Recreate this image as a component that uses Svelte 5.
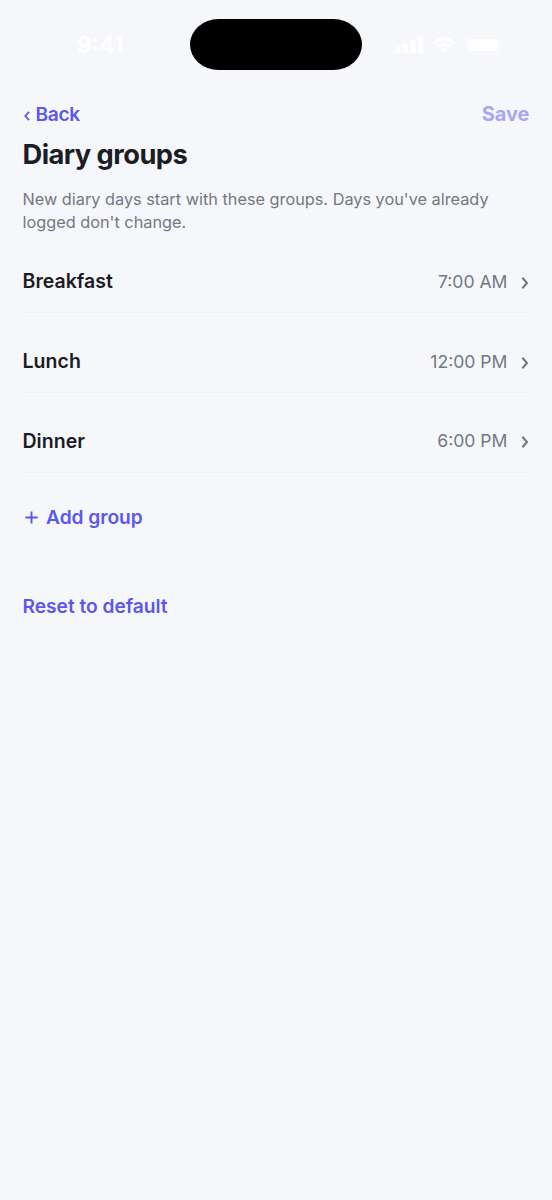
<script>
  const title = 'Diary groups';
  let groups = [
    { name: 'Breakfast', time: '7:00 AM' },
    { name: 'Lunch', time: '12:00 PM' },
    { name: 'Dinner', time: '6:00 PM' },
  ];
</script>

<style>
  :global(body) {
    background: #f6f7fb;
  }

  .screen {
    box-sizing: border-box;
    min-height: 1200px;
    background: #f6f7fb;
    color: #1b1c24;
    font-family: Inter, 'Liberation Sans', sans-serif;
  }

  .status {
    display: grid;
    grid-template-columns: 190px 172px 1fr;
    box-sizing: border-box;
    height: 99px;
    padding-top: 19px;
    color: #fff;
  }

  .clock {
    height: 51px;
    line-height: 52px;
    padding-left: 77px;
    font-size: 23px;
    font-weight: 600;
  }

  .island {
    height: 51px;
    border-radius: 29px / 26px;
    background: #000;
  }

  .signals {
    display: block;
    margin: 14px 0 0 31px;
  }

  main {
    padding: 0 22.5px;
  }

  button {
    display: block;
    margin: 0;
    padding: 0;
    border: 0;
    background: none;
    font: inherit;
    font-size: 19.2px;
    font-weight: 600;
    line-height: 30px;
    letter-spacing: -0.03px;
    color: #5b58f0;
  }

  header {
    display: flex;
    justify-content: space-between;
    height: 30px;
  }

  header button,
  .add {
    display: flex;
    align-items: center;
  }

  .back {
    letter-spacing: -0.35px;
  }

  .save {
    font-size: 20px;
    font-weight: 700;
    opacity: 0.5;
  }

  .back svg {
    margin: 3px 6px 0 1px;
  }

  h1 {
    margin: 8px 0 0;
    font-size: 27.3px;
    font-weight: 700;
    line-height: 36px;
    letter-spacing: -0.55px;
  }

  .hint {
    margin: 15px 0 0;
    font-size: 16.3px;
    line-height: 23.4px;
    color: #747784;
  }

  ul {
    margin: 15.6px 0 0;
    padding: 0;
    list-style: none;
  }

  li {
    display: flex;
    align-items: center;
    box-sizing: border-box;
    height: 79.6px;
    padding-top: 17px;
    border-bottom: 1px solid #eeeff3;
  }

  li:first-child {
    height: 63px;
    padding-top: 0;
  }

  .name {
    flex: 1;
    font-size: 19.5px;
    font-weight: 600;
    letter-spacing: 0.03px;
  }

  .time {
    font-size: 17.6px;
    color: #747784;
  }

  li svg {
    margin: 3px 1px 0 13px;
  }

  .add {
    margin-top: 29.8px;
  }

  .add svg {
    margin: 0 8px 0 2.5px;
  }

  .reset {
    margin-top: 59px;
  }
</style>

<div class="screen">
  <div class="status">
    <div class="clock">9:41</div>
    <div class="island"></div>
    <svg class="signals" width="112" height="24" viewBox="0 0 112 24" fill="#fff">
      <rect x="2.5" y="14" width="5" height="6.3" rx="1.4" />
      <rect x="10" y="11" width="5" height="9.3" rx="1.4" />
      <rect x="17.5" y="7" width="5" height="13.3" rx="1.4" />
      <rect x="25" y="3.3" width="5" height="17" rx="1.4" />
      <path d="M40 9.2Q51 -1.8 62 9.2L59.8 11.4Q51 2.9 42.2 11.4Z" />
      <path d="M43.8 13Q51 6 58.2 13L56 15.2Q51 10.7 46 15.2Z" />
      <path d="M47.4 16.6Q51 13.6 54.6 16.6L51 20.2Z" />
      <rect x="73.7" y="3.7" width="33" height="16.3" rx="5" fill="none" stroke="#fff" stroke-opacity="0.4" stroke-width="1.3" />
      <rect x="75.5" y="5.7" width="29" height="12.3" rx="3.5" />
      <path d="M108 9.7Q110.6 11.8 108 13.9Z" fill-opacity="0.45" />
    </svg>
  </div>

  <main>
    <header>
      <button class="back">
        <svg width="6" height="10" viewBox="0 0 6 10" fill="none" stroke="currentColor" stroke-width="1.8">
          <path d="M5 0.8L1.3 5L5 9.2" />
        </svg>
        Back
      </button>
      <button class="save" disabled>Save</button>
    </header>

    <h1>{title}</h1>
    <p class="hint">New diary days start with these groups. Days you've already logged don't change.</p>

    <ul>
      {#each groups as group}
        <li>
          <span class="name">{group.name}</span>
          <span class="time">{group.time}</span>
          <svg width="8" height="12" viewBox="0 0 8 12" fill="none" stroke="#747784" stroke-width="2.1">
            <path d="M1.4 0.8L6 6L1.4 11.2" />
          </svg>
        </li>
      {/each}
    </ul>

    <button class="add">
      <svg width="13" height="13" viewBox="0 0 13 13" stroke="currentColor" stroke-width="1.9">
        <path d="M6.5 0.4V12.6M0.4 6.5H12.6" />
      </svg>
      Add group
    </button>
    <button class="reset">Reset to default</button>
  </main>
</div>
